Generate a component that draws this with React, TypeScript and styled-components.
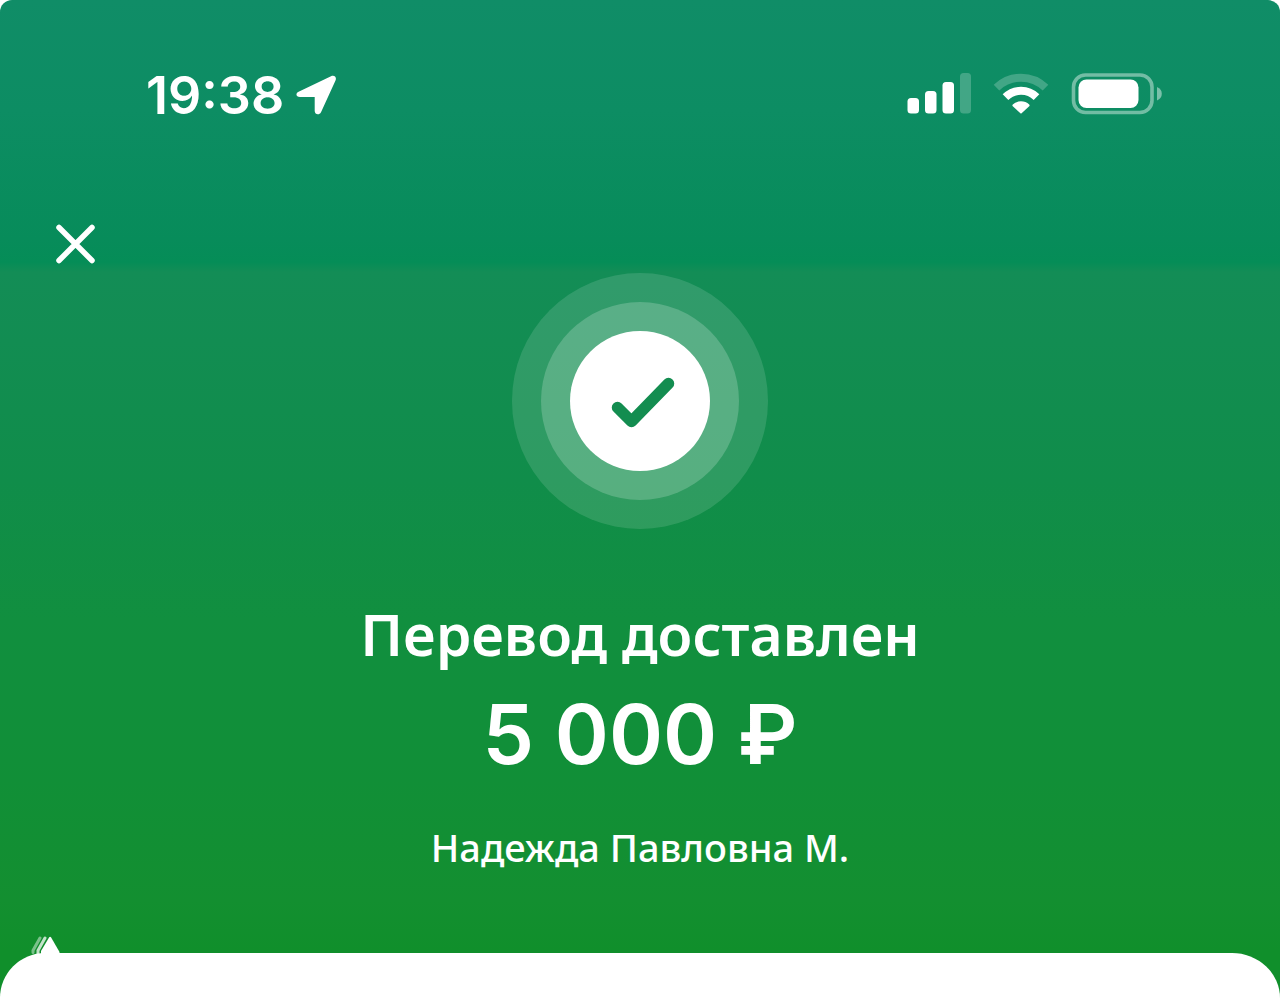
import React from "react";
import styled, { createGlobalStyle } from "styled-components";

const GlobalStyle = createGlobalStyle`
  *, *::before, *::after { box-sizing: border-box; }
  body {
    margin: 0;
    background: #ffffff;
    font-family: "Noto Sans", "Open Sans", sans-serif;
    color: #ffffff;
  }
`;

const Screen = styled.main`
  display: flex;
  flex-direction: column;
  min-height: 100vh;
  overflow: hidden;
  border-radius: 12px 12px 0 0;
  background: linear-gradient(
    180deg,
    #108d67 0,
    #0d8d63 110px,
    #078c5a 240px,
    #058d57 262px,
    #138d56 272px,
    #108d4a 480px,
    #118f3f 620px,
    #118f37 780px,
    #138f30 900px,
    #108f2b 950px
  );
`;

const StatusBar = styled.header`
  display: flex;
  align-items: center;
  justify-content: space-between;
  padding: 64px 118px 0 146px;
`;

const StatusGroup = styled.div<{ $gap: number }>`
  display: flex;
  align-items: center;
  gap: ${({ $gap }) => $gap}px;
  height: 60px;
`;

const Time = styled.time`
  padding-top: 4px;
  font-family: Inter, sans-serif;
  font-size: 52px;
  font-weight: 600;
  line-height: 60px;
`;

const TopBar = styled.nav`
  display: flex;
  padding: 92px 48px 0;
`;

const CloseButton = styled.button`
  display: flex;
  align-items: center;
  justify-content: center;
  width: 56px;
  height: 56px;
  padding: 0;
  border: 0;
  background: none;
  color: inherit;
  cursor: pointer;
`;

const Result = styled.section`
  display: flex;
  flex-direction: column;
  align-items: center;
  padding: 1px 24px 80px;
  text-align: center;
`;

const Ring = styled.div<{ $size: number; $color: string }>`
  display: flex;
  align-items: center;
  justify-content: center;
  width: ${({ $size }) => $size}px;
  height: ${({ $size }) => $size}px;
  border-radius: 50%;
  background: ${({ $color }) => $color};
`;

const Title = styled.h1`
  margin: 65px 0 0;
  font-size: 57px;
  font-weight: 600;
  line-height: 80px;
`;

const Amount = styled.p`
  margin: 11px 0 0;
  font-family: Inter, "Noto Sans", sans-serif;
  font-size: 82px;
  font-weight: 600;
  line-height: 100px;
`;

const Recipient = styled.p`
  margin: 36px 0 0;
  font-size: 38px;
  font-weight: 500;
  line-height: 52px;
`;

const Sheet = styled.section`
  position: relative;
  flex: 1;
  min-height: 45px;
  border-radius: 45px 48px 0 0 / 45px 45px 0 0;
  background: #ffffff;
`;

const Peak = styled.svg`
  position: absolute;
  top: -17px;
  left: 30px;
`;

const LocationIcon = () => (
  <svg width="42" height="42" viewBox="0 0 42 42" aria-hidden="true">
    <path
      d="M3.6 18.8 36 3.200C39.300 1.700 42 4.200 40.500 7.400L26 39.200C24.200 42.600 19.700 41.500 19.700 38V24H4.900C1 24 .2 20.400 3.600 18.800Z"
      fill="currentColor"
    />
  </svg>
);

const SignalIcon = () => (
  <svg width="64" height="42" viewBox="0 0 64 42" role="img" aria-label="Signal">
    <g fill="currentColor">
      <rect x="0.500" y="25" width="11.500" height="15.500" rx="3.500" />
      <rect x="18" y="18" width="11.500" height="22.500" rx="3.500" />
      <rect x="35.500" y="9" width="11.500" height="31.500" rx="3.500" />
      <rect x="53" y="0" width="11" height="40.500" rx="3.500" opacity=".22" />
    </g>
  </svg>
);

const WifiIcon = () => (
  <svg width="56" height="42" viewBox="0 0 56 42" role="img" aria-label="Wi-Fi">
    <path d="M3.500 14.700a35 35 0 0 1 49 0" fill="none" stroke="currentColor" strokeWidth="8" opacity=".22" />
    <path d="M12.500 24.200a22 22 0 0 1 31 0" fill="none" stroke="currentColor" strokeWidth="8" />
    <path d="M19.800 31.600a12 12 0 0 1 16.400 0q.8.900 0 1.700L28.600 40.300q-.6.500-1.200 0l-7.600-7q-.8-.8 0-1.700Z" fill="currentColor" />
  </svg>
);

const BatteryIcon = () => (
  <svg width="91" height="42" viewBox="0 0 91 42" role="img" aria-label="Battery">
    <rect x="2.500" y="2" width="78.500" height="37.500" rx="12" fill="none" stroke="currentColor" strokeWidth="3.600" opacity=".42" />
    <rect x="7.500" y="6.500" width="60" height="28.500" rx="8" fill="currentColor" />
    <path d="M86 14q4.800 2 4.800 6.700T86 27.500Z" fill="currentColor" opacity=".45" />
  </svg>
);

export default function App() {
  return (
    <>
      <GlobalStyle />
      <Screen>
        <StatusBar>
          <StatusGroup $gap={11}>
            <Time>19:38</Time>
            <LocationIcon />
          </StatusGroup>
          <StatusGroup $gap={22}>
            <SignalIcon />
            <WifiIcon />
            <BatteryIcon />
          </StatusGroup>
        </StatusBar>
        <TopBar>
          <CloseButton type="button" aria-label="Закрыть">
            <svg width="40" height="40" viewBox="0 0 40 40" aria-hidden="true">
              <path d="M3 3.500 36 36.500M36 3.500 3 36.500" stroke="currentColor" strokeWidth="5.500" strokeLinecap="round" />
            </svg>
          </CloseButton>
        </TopBar>
        <Result>
          <Ring $size={256} $color="rgba(255, 255, 255, 0.13)">
            <Ring $size={198} $color="rgba(255, 255, 255, 0.2)">
              <Ring $size={140} $color="#ffffff">
                <svg width="140" height="140" viewBox="0 0 140 140" aria-hidden="true">
                  <path
                    d="M47.500 76.500 61.500 90.500 98.500 52.500"
                    fill="none"
                    stroke="#138d50"
                    strokeWidth="11.500"
                    strokeLinecap="round"
                    strokeLinejoin="round"
                  />
                </svg>
              </Ring>
            </Ring>
          </Ring>
          <Title>Перевод доставлен</Title>
          <Amount>5&nbsp;000&nbsp;₽</Amount>
          <Recipient>Надежда Павловна М.</Recipient>
        </Result>
        <Sheet>
          <Peak width="31" height="20" viewBox="0 0 31 20" aria-hidden="true">
            <path d="M10 2 3 14.500v2" fill="none" stroke="#ffffff" strokeWidth="3" strokeLinecap="round" opacity=".45" />
            <path d="M15 2 8 14.500v3" fill="none" stroke="#ffffff" strokeWidth="3" strokeLinecap="round" opacity=".75" />
            <path d="M19.200 1.200q.9-1 1.800 0L29.500 16v4H11v-5Z" fill="#ffffff" />
          </Peak>
        </Sheet>
      </Screen>
    </>
  );
}
